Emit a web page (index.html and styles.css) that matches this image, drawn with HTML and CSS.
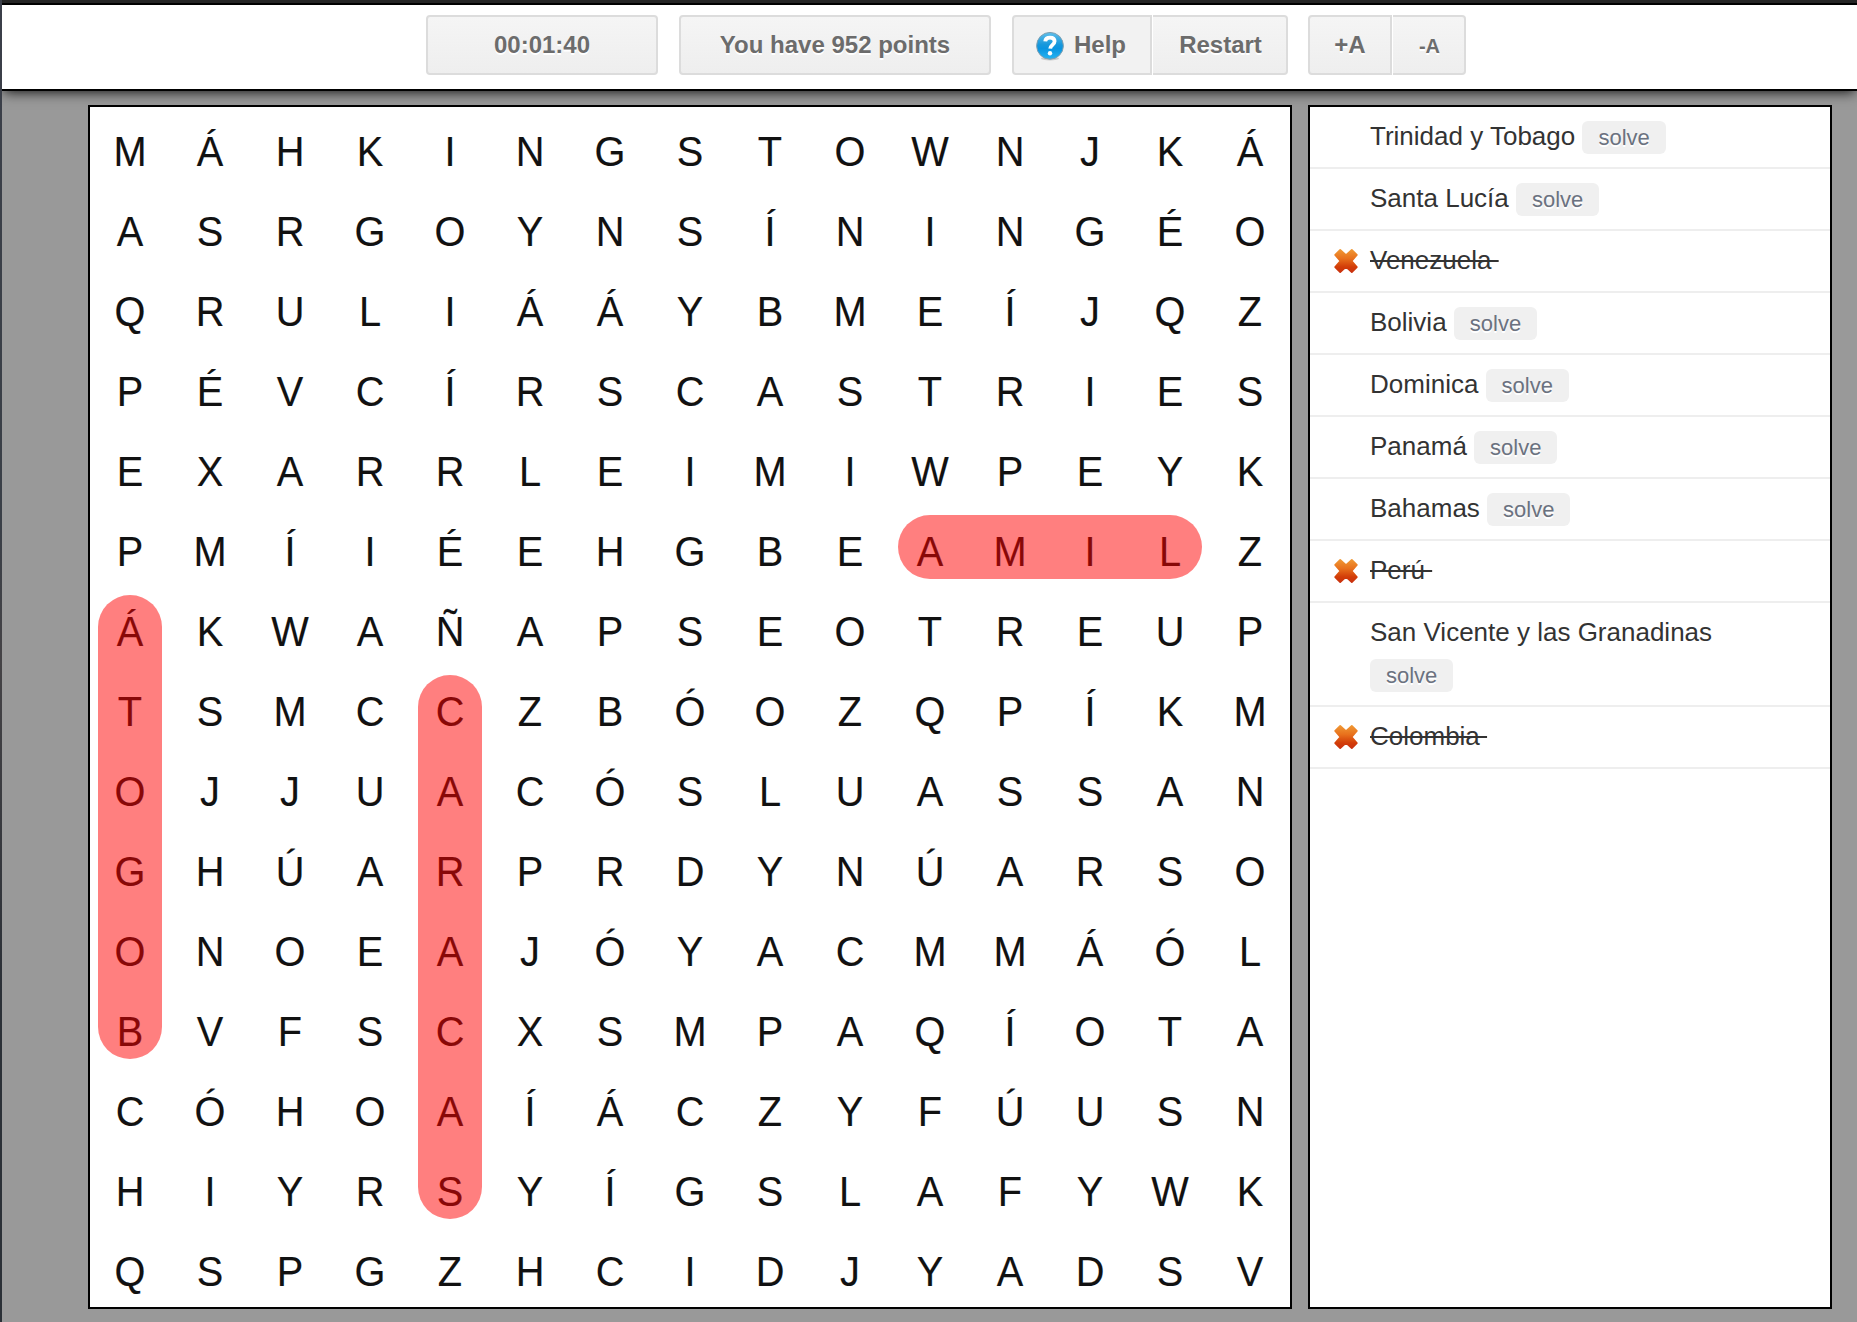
FILE: index.html
```html
<!DOCTYPE html>
<html lang="es">
<head>
<meta charset="utf-8">
<title>Word search</title>
<link rel="stylesheet" href="styles.css">
</head>
<body>
<div class="page">
<header class="toolbar">
  <div class="btn timer">00:01:40</div>
  <div class="btn points">You have 952 points</div>
  <div class="group">
    <div class="btn first help">
      <svg class="help-icon" viewBox="0 0 32 32" width="32" height="32">
        <defs>
          <linearGradient id="blue" x1="0" y1="0" x2="0" y2="1"><stop offset="0" stop-color="#5fbfeb"/><stop offset=".45" stop-color="#1898dc"/><stop offset=".6" stop-color="#0a94e0"/><stop offset="1" stop-color="#27b4f2"/></linearGradient>
        </defs>
        <ellipse cx="16" cy="28.6" rx="9" ry="1.8" fill="#999" opacity=".45"/>
        <circle cx="16" cy="15.8" r="13.4" fill="url(#blue)" stroke="#7f9fb0" stroke-width="1"/>
        <path d="M11.2 11.400c.3-2.600 2-3.800 4.800-3.800 2.900 0 4.600 1.400 4.600 3.700 0 3.400-4.200 3.700-4.400 7.400" fill="none" stroke="#fff" stroke-width="3.800"/>
        <circle cx="16" cy="23.200" r="2.200" fill="#fff"/>
      </svg>
      <span>Help</span>
    </div>
    <div class="btn last restart">Restart</div>
  </div>
  <div class="group sizes">
    <div class="btn first bigger">+A</div>
    <div class="btn last smaller">-A</div>
  </div>
</header>
<main class="game">
  <section class="board">
    <div class="letters">
      <span>M</span><span>Á</span><span>H</span><span>K</span><span>I</span><span>N</span><span>G</span><span>S</span><span>T</span><span>O</span><span>W</span><span>N</span><span>J</span><span>K</span><span>Á</span>
      <span>A</span><span>S</span><span>R</span><span>G</span><span>O</span><span>Y</span><span>N</span><span>S</span><span>Í</span><span>N</span><span>I</span><span>N</span><span>G</span><span>É</span><span>O</span>
      <span>Q</span><span>R</span><span>U</span><span>L</span><span>I</span><span>Á</span><span>Á</span><span>Y</span><span>B</span><span>M</span><span>E</span><span>Í</span><span>J</span><span>Q</span><span>Z</span>
      <span>P</span><span>É</span><span>V</span><span>C</span><span>Í</span><span>R</span><span>S</span><span>C</span><span>A</span><span>S</span><span>T</span><span>R</span><span>I</span><span>E</span><span>S</span>
      <span>E</span><span>X</span><span>A</span><span>R</span><span>R</span><span>L</span><span>E</span><span>I</span><span>M</span><span>I</span><span>W</span><span>P</span><span>E</span><span>Y</span><span>K</span>
      <span>P</span><span>M</span><span>Í</span><span>I</span><span>É</span><span>E</span><span>H</span><span>G</span><span>B</span><span>E</span><span>A</span><span>M</span><span>I</span><span>L</span><span>Z</span>
      <span>Á</span><span>K</span><span>W</span><span>A</span><span>Ñ</span><span>A</span><span>P</span><span>S</span><span>E</span><span>O</span><span>T</span><span>R</span><span>E</span><span>U</span><span>P</span>
      <span>T</span><span>S</span><span>M</span><span>C</span><span>C</span><span>Z</span><span>B</span><span>Ó</span><span>O</span><span>Z</span><span>Q</span><span>P</span><span>Í</span><span>K</span><span>M</span>
      <span>O</span><span>J</span><span>J</span><span>U</span><span>A</span><span>C</span><span>Ó</span><span>S</span><span>L</span><span>U</span><span>A</span><span>S</span><span>S</span><span>A</span><span>N</span>
      <span>G</span><span>H</span><span>Ú</span><span>A</span><span>R</span><span>P</span><span>R</span><span>D</span><span>Y</span><span>N</span><span>Ú</span><span>A</span><span>R</span><span>S</span><span>O</span>
      <span>O</span><span>N</span><span>O</span><span>E</span><span>A</span><span>J</span><span>Ó</span><span>Y</span><span>A</span><span>C</span><span>M</span><span>M</span><span>Á</span><span>Ó</span><span>L</span>
      <span>B</span><span>V</span><span>F</span><span>S</span><span>C</span><span>X</span><span>S</span><span>M</span><span>P</span><span>A</span><span>Q</span><span>Í</span><span>O</span><span>T</span><span>A</span>
      <span>C</span><span>Ó</span><span>H</span><span>O</span><span>A</span><span>Í</span><span>Á</span><span>C</span><span>Z</span><span>Y</span><span>F</span><span>Ú</span><span>U</span><span>S</span><span>N</span>
      <span>H</span><span>I</span><span>Y</span><span>R</span><span>S</span><span>Y</span><span>Í</span><span>G</span><span>S</span><span>L</span><span>A</span><span>F</span><span>Y</span><span>W</span><span>K</span>
      <span>Q</span><span>S</span><span>P</span><span>G</span><span>Z</span><span>H</span><span>C</span><span>I</span><span>D</span><span>J</span><span>Y</span><span>A</span><span>D</span><span>S</span><span>V</span>
    </div>
    <div class="marks">
      <div class="mark lima"></div>
      <div class="mark bogota"></div>
      <div class="mark caracas"></div>
    </div>
  </section>
  <ul class="words">
    <li>Trinidad y Tobago <button>solve</button></li>
    <li>Santa Lucía <button>solve</button></li>
    <li class="found"><svg class="cross" viewBox="0 0 24 26"><use href="#x"/></svg><s>Venezuela&nbsp;</s></li>
    <li>Bolivia <button>solve</button></li>
    <li>Dominica <button>solve</button></li>
    <li>Panamá <button>solve</button></li>
    <li>Bahamas <button>solve</button></li>
    <li class="found"><svg class="cross" viewBox="0 0 24 26"><use href="#x"/></svg><s>Perú&nbsp;</s></li>
    <li>San Vicente y las Granadinas <button>solve</button></li>
    <li class="found"><svg class="cross" viewBox="0 0 24 26"><use href="#x"/></svg><s>Colombia&nbsp;</s></li>
  </ul>
</main>
</div>
<svg class="defs" width="0" height="0">
  <defs>
    <linearGradient id="fire" gradientUnits="userSpaceOnUse" x1="0" y1="1" x2="0" y2="25"><stop offset="0" stop-color="#f09a35"/><stop offset=".4" stop-color="#e8701c"/><stop offset=".75" stop-color="#d23c08"/><stop offset="1" stop-color="#c83010"/></linearGradient>
    <path id="x" d="M6.200 2 12 7.200 17.800 2 22.800 7 17.600 13 22.800 19 17.800 24 12 18.800 6.200 24 1.200 19 6.400 13 1.200 7Z" fill="url(#fire)" stroke="url(#fire)" stroke-width="1.800" stroke-linejoin="round"/>
  </defs>
</svg>
</body>
</html>
```
FILE: styles.css
```css
* { box-sizing: border-box; }

body {
  margin: 0;
  height: 1322px;
  overflow: hidden;
  padding-left: 2px;
  background: linear-gradient(#3b3f49, #3a3f47 40%, #454346 50%, #2b3037 75%, #2b3037);
  font-family: "Liberation Sans", Arial, sans-serif;
  color: #333;
}

.page {
  height: 1322px;
  overflow: hidden;
  background: #999;
  border-top: 3px solid #252525;
}

.toolbar {
  position: relative;
  display: flex;
  height: 88px;
  padding: 10px 0 0 424px;
  background: #fff;
  border-top: 2px solid #000;
  border-bottom: 2px solid #000;
  box-shadow: 0 3px 12px -2px rgba(0, 0, 0, .9);
}

.group { display: flex; gap: 1px; margin-left: 21px; }
.sizes { margin-left: 20px; }

.btn {
  display: flex;
  align-items: center;
  justify-content: center;
  height: 60px;
  border: 2px solid #dcdcdc;
  border-radius: 4px;
  background: linear-gradient(#f5f5f5, #eee);
  color: #6c6c6c;
  font-size: 24px;
  font-weight: bold;
  text-shadow: 0 2px 0 #fff;
  white-space: nowrap;
}

.first { border-radius: 4px 0 0 4px; }
.last { border-left: 0; border-radius: 0 4px 4px 0; }

.timer { width: 232px; }
.points { width: 312px; margin-left: 21px; }
.help { width: 140px; background: #f2f2f2; justify-content: flex-start; padding-left: 20px; }
.help-icon { flex: none; margin: 2px 8px 0 0; }
.restart { width: 135px; padding-left: 2px; }
.bigger { width: 84px; }
.smaller { width: 73px; padding: 2px 0 0 2px; font-size: 20px; }

.game {
  display: flex;
  align-items: flex-start;
  gap: 16px;
  padding: 14px 0 0 86px;
}

.board {
  position: relative;
  width: 1204px;
  height: 1204px;
  background: #fff;
  border: 2px solid #000;
}

.letters,
.marks {
  display: grid;
  grid-template: repeat(15, 80px) / repeat(15, 80px);
}

.letters {
  color: #111;
  font-size: 43px;
  line-height: 89px;
  text-align: center;
}

.letters span {
  height: 80px;
  transform: scaleX(.925);
  -webkit-text-stroke: .15px #111;
}

.marks { position: absolute; inset: 0; }
.mark {
  margin: 8px;
  border-radius: 32px;
  background: rgba(255, 0, 0, .5);
}

.lima { grid-area: 6 / 11 / 7 / 15; }
.bogota { grid-area: 7 / 1 / 13 / 2; }
.caracas { grid-area: 8 / 5 / 15 / 6; }

.words {
  width: 524px;
  height: 1204px;
  margin: 0;
  padding: 0;
  list-style: none;
  background: #fff;
  border: 2px solid #000;
  font-size: 26px;
  line-height: 42px;
}

.words li {
  padding: 8px 30px 10px 60px;
  border-bottom: 2px solid #eee;
}

.found { display: flex; }
.cross { width: 24px; height: 26px; margin: 9px 12px 0 -36px; }
.words s { text-decoration-thickness: 2px; }

.words button {
  height: 33px;
  padding: 0 16px;
  border: 0;
  border-radius: 6px;
  background: #f0f0f0;
  color: #6b7280;
  font: 22px/33px "Liberation Sans", Arial, sans-serif;
  text-shadow: 0 2px 0 #fff;
}

.defs { position: absolute; }
```
